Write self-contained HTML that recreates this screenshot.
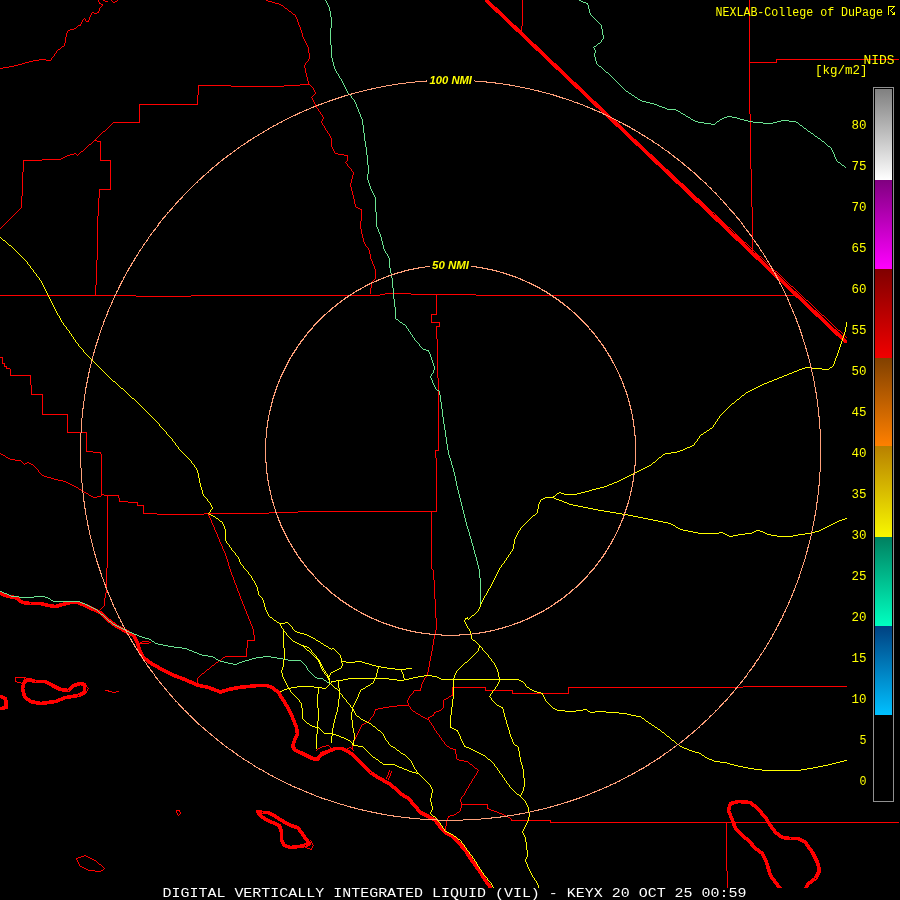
<!DOCTYPE html>
<html><head><meta charset="utf-8"><title>DIGITAL VERTICALLY INTEGRATED LIQUID (VIL) - KEYX</title>
<style>html,body{margin:0;padding:0;background:#000;}body{width:900px;height:900px;overflow:hidden;}svg{display:block;will-change:transform;}.m{font-family:"Liberation Mono",monospace;stroke-width:0;}.s{font-family:"Liberation Sans",sans-serif;font-weight:bold;font-style:italic;}</style></head><body>
<svg width="900" height="900" viewBox="0 0 900 900">
<rect width="900" height="900" fill="#000"/>
<defs><clipPath id="mapclip"><rect x="0" y="0" width="900" height="888"/></clipPath>
<linearGradient id="g0" x1="0" y1="0" x2="0" y2="1"><stop offset="0" stop-color="#808080"/><stop offset="1" stop-color="#ffffff"/></linearGradient>
<linearGradient id="g1" x1="0" y1="0" x2="0" y2="1"><stop offset="0" stop-color="#800080"/><stop offset="1" stop-color="#ff00ff"/></linearGradient>
<linearGradient id="g2" x1="0" y1="0" x2="0" y2="1"><stop offset="0" stop-color="#800000"/><stop offset="1" stop-color="#f00000"/></linearGradient>
<linearGradient id="g3" x1="0" y1="0" x2="0" y2="1"><stop offset="0" stop-color="#804000"/><stop offset="1" stop-color="#ff8000"/></linearGradient>
<linearGradient id="g4" x1="0" y1="0" x2="0" y2="1"><stop offset="0" stop-color="#b88000"/><stop offset="1" stop-color="#f8f800"/></linearGradient>
<linearGradient id="g5" x1="0" y1="0" x2="0" y2="1"><stop offset="0" stop-color="#008060"/><stop offset="1" stop-color="#00ffc0"/></linearGradient>
<linearGradient id="g6" x1="0" y1="0" x2="0" y2="1"><stop offset="0" stop-color="#004080"/><stop offset="1" stop-color="#00c0ff"/></linearGradient>
</defs>
<g clip-path="url(#mapclip)"><g transform="translate(0.5,0.5)" fill="none" shape-rendering="crispEdges" stroke-linejoin="round" stroke-linecap="round">
<polyline points="486,0 845,341" stroke="#ff0000" stroke-width="3.7"/>
<polyline points="0,593 8,596 15,597 22,602 30,603 40,603 48,605 55,606 62,604 70,602 77,602 85,605 93,609 100,612 107,619 115,625 122,629 128,632 133,635 137,642 139,650 143,657 150,662.5 158,667 167,672 175,675.5 183,678.5 197,684.5 208,687 220,691.5 228,689 238,687 248,686 258,685 266,685 272,687 278,692 283,700 288,708 292,717 296,727 297,733 294,740 292,746 295,750 300,752 306,755 312,758 317,759 320,755 325,752 330,750 335,748 341,748 346,750 352,754 358,760 364,766 370,772 376,776 383,780 390,784 396,789 400,793 408,798 414,805 420,812 428,816 435,820 440,827 445,832 452,836 458,842 465,850 470,858 475,865 480,872 485,880 490,887" stroke="#ff0000" stroke-width="3.6"/>
<polyline points="22,688 24,681 28,679 35,681 45,681 52,685 60,689 68,690 73,685 80,683 84,684 84,692 78,695 65,697 55,701 40,703 30,701 24,696 22,688" stroke="#ff0000" stroke-width="3.6"/>
<polyline points="0,696 5,698 6,707 0,708" stroke="#ff0000" stroke-width="3.6"/>
<polyline points="257,811 262,812 268,812 275,816 283,821 290,825 297,827 301,832 305,838 309,843 305,845 298,846 290,847 284,845 281,840 281,832 279,825 272,822 265,819 260,815 257,811" stroke="#ff0000" stroke-width="3.6"/>
<polyline points="780,888 775,882 770,875 766,862 762,853 755,848 748,840 742,835 735,828 732,820 728,810 730,803 738,801 750,802 757,808 765,817 770,825 775,832 782,837 790,838 798,838 805,842 812,852 817,862 819,870 815,878 808,883 805,888" stroke="#ff0000" stroke-width="3.6"/>
</g>
<g fill="none" stroke-width="1" shape-rendering="crispEdges">
<path transform="translate(0,0.5)" d="M103 0h2M266 0h2M105 1h3M115 1h2M268 1h4M113 2h2M272 2h3M99 3h2M275 3h4M101 4h2M279 4h2M281 5h2M493 7h2M285 8h2M289 11h2M92 12h2M97 12h2M94 13h3M293 14h2M86 21h3M509 22h2M78 25h3M74 28h2M70 29h4M68 30h2M520 32h2M525 37h2M62 46h2M58 49h2M540 51h2M39 59h7M776 59h123M33 60h6M46 60h5M29 61h4M25 62h4M749 62h28M22 63h3M18 64h4M14 65h4M9 66h5M556 66h2M3 67h6M0 68h3M572 81h2M300 84h10M198 85h33M284 85h16M231 86h53M587 95h2M139 104h59M603 110h2M113 122h27M619 125h2M103 131h2M634 139h2M94 140h3M97 141h4M89 144h2M81 151h2M74 153h2M335 153h3M70 154h4M338 154h6M650 154h2M67 155h3M344 155h4M65 156h2M63 157h2M61 158h2M42 159h19M23 160h19M100 160h11M666 169h2M681 183h2M99 189h12M697 198h2M356 207h2M358 208h2M360 209h2M712 212h2M728 227h2M744 242h2M751 248h2M752 250h2M759 256h2M775 271h2M791 286h2M385 293h26M380 294h5M411 294h65M0 295h136M191 295h189M476 295h322M136 296h55M806 300h2M431 314h6M822 315h2M431 322h9M436 326h4M838 330h2M0 357h3M2 363h3M4 366h3M6 368h4M10 375h21M31 394h12M42 414h26M67 432h20M435 450h4M86 451h7M93 452h8M1 454h2M3 455h2M6 457h2M8 458h2M10 459h5M15 460h6M27 462h2M25 463h2M29 463h2M31 464h2M42 475h2M44 476h3M47 477h4M51 478h3M54 479h4M58 480h5M63 481h3M66 482h2M68 483h2M70 484h2M72 485h2M74 486h2M76 487h2M79 489h2M81 490h2M84 492h2M86 493h2M101 494h3M89 495h2M104 495h15M91 496h2M97 496h4M93 497h4M119 501h9M128 502h10M137 505h7M298 511h139M269 512h29M143 513h14M204 513h65M157 514h47M247 640h8M142 641h7M140 642h2M149 642h2M139 643h10M225 656h22M223 657h2M219 660h2M216 662h2M212 665h2M207 669h2M202 673h2M15 677h11M15 681h2M17 682h4M21 683h2M743 686h104M452 687h34M568 687h175M105 690h4M414 690h7M485 690h28M108 691h4M116 691h3M112 692h4M512 693h57M451 695h2M449 696h2M446 698h2M444 699h2M397 705h12M389 706h8M383 707h6M378 708h5M375 709h3M439 710h2M413 711h2M436 711h3M434 712h2M416 713h2M418 714h2M432 715h2M421 716h2M430 716h2M423 717h2M428 717h2M425 718h2M427 719h2M366 722h2M364 723h2M362 724h2M326 745h3M322 746h4M447 746h2M320 747h2M349 747h2M318 748h2M330 748h2M347 748h2M351 748h2M450 748h3M328 749h2M453 749h3M325 750h3M322 751h3M320 752h2M457 759h2M459 760h5M464 761h4M470 764h2M475 768h2M461 804h27M487 808h2M489 809h2M176 810h4M491 810h3M494 811h3M457 812h2M497 812h2M499 813h3M454 814h2M502 814h2M450 815h4M504 815h2M448 816h2M506 816h2M508 817h2M511 820h40M550 822h349M308 841h2M306 842h2M304 843h2M305 847h2M307 848h3M310 849h2M84 855h2M81 856h3M86 856h2M78 857h3M88 857h2M76 858h2M90 858h2M92 859h2M94 860h2M99 864h2M80 866h2M82 867h2M84 868h2M86 869h2M88 870h7M101 870h2M95 871h6" stroke="#ff0000"/><path transform="translate(0.5,0)" d="M0 228v1M0 453v1M1 227v1M2 226v1M2 358v5M3 225v1M4 224v1M4 364v2M5 223v1M5 456v1M6 222v1M6 367v1M7 221v1M8 220v1M9 219v1M10 218v1M10 369v6M11 217v1M12 216v1M13 215v1M14 214v1M15 213v1M15 678v3M16 212v1M17 211v1M18 210v1M19 209v1M20 208v1M21 196v12M21 461v1M22 172v24M22 462v1M22 682v1M23 161v11M23 463v1M23 680v2M24 464v1M24 678v2M30 376v9M31 385v9M33 465v1M34 466v1M35 467v1M36 468v1M37 469v1M38 470v2M39 472v1M40 473v1M41 474v1M42 395v19M51 58v2M52 57v1M53 56v1M54 54v2M55 53v1M56 51v2M57 50v1M60 48v1M61 47v1M64 43v3M65 37v6M66 33v4M67 31v2M67 415v17M76 27v1M76 154v1M76 859v1M77 26v1M77 155v1M77 860v2M78 154v1M78 488v1M78 862v2M79 153v1M79 864v2M80 24v1M80 152v1M81 22v2M82 20v2M83 19v1M83 150v1M83 491v1M84 18v1M84 149v1M84 683v1M85 19v2M85 148v1M85 684v1M85 693v1M86 147v1M86 433v18M86 685v2M86 691v2M87 146v1M87 687v1M87 689v2M88 20v1M88 145v1M88 494v1M88 688v1M89 17v3M90 15v2M91 13v2M91 143v1M92 142v1M93 141v1M95 139v1M95 285v10M96 138v1M96 260v25M96 861v1M97 137v1M97 216v44M97 862v1M98 0v2M98 11v1M98 136v1M98 198v18M98 863v1M99 2v1M99 8v3M99 135v1M99 190v8M100 7v1M100 134v1M100 142v18M100 453v1M100 609v1M101 6v1M101 133v1M101 454v40M101 495v1M101 608v1M101 865v1M102 5v1M102 132v1M102 607v1M102 866v1M103 606v1M103 867v1M103 869v1M104 598v8M104 868v1M105 130v1M105 593v5M106 129v1M106 568v25M107 128v1M107 496v72M108 127v1M109 126v1M110 125v1M110 161v28M111 0v1M111 124v1M112 1v1M112 123v1M117 0v1M118 496v2M119 498v3M137 503v2M139 105v17M143 506v7M176 811v2M177 813v2M178 815v1M179 811v1M179 814v1M180 812v2M197 95v9M197 678v5M198 86v9M198 677v1M199 676v1M200 675v1M201 674v1M204 672v1M205 671v1M206 670v1M208 514v2M209 516v2M209 668v1M210 518v2M210 667v1M211 520v3M211 666v1M212 523v2M213 525v2M214 527v3M214 664v1M215 530v2M215 663v1M216 532v2M217 534v3M218 537v2M218 661v1M219 539v3M220 542v2M221 544v2M221 659v1M222 546v3M222 658v1M223 549v2M224 551v2M225 553v3M226 556v3M227 559v3M228 562v4M229 566v3M230 569v3M231 572v3M232 575v2M233 577v3M234 580v3M235 583v2M236 585v3M237 588v3M238 591v2M239 593v3M240 596v3M241 599v2M242 601v3M243 604v2M244 606v3M245 609v2M246 611v3M246 648v8M247 614v2M247 641v7M248 616v3M249 619v2M250 621v3M251 624v2M252 626v3M253 629v6M254 635v5M283 6v1M284 7v1M287 9v1M288 10v1M291 12v1M292 13v1M295 15v2M296 17v2M297 19v3M298 22v3M299 25v2M300 27v3M301 30v3M302 33v4M303 37v2M303 844v1M304 39v2M304 65v3M305 41v2M305 63v2M305 68v5M306 43v2M306 62v1M306 73v4M307 45v2M307 61v1M307 77v4M308 47v6M308 59v2M308 81v3M309 53v6M310 85v1M310 840v1M311 86v1M311 97v1M311 841v2M311 848v1M312 87v1M312 96v1M312 98v2M312 843v2M312 846v2M313 88v2M313 95v1M313 100v2M313 845v1M314 90v2M314 94v1M314 102v2M315 92v2M315 104v2M316 106v2M316 750v1M317 108v1M317 749v1M318 109v2M319 111v1M320 112v2M321 114v1M321 121v2M322 115v2M322 119v2M322 123v2M323 117v2M323 125v1M324 126v2M325 128v2M326 130v1M327 131v2M328 133v1M329 134v2M329 746v1M330 136v2M330 747v1M331 138v9M332 147v2M333 149v2M334 151v2M345 162v1M346 161v1M346 163v1M346 749v1M347 156v5M347 164v2M348 166v1M349 167v1M350 168v1M350 183v4M351 169v2M351 179v4M351 187v4M352 171v1M352 175v4M352 191v4M352 745v3M352 749v1M353 172v3M353 195v4M353 741v4M353 750v1M354 199v5M354 739v2M355 204v3M355 737v2M356 735v2M357 733v2M358 731v2M359 729v2M360 221v8M360 727v2M361 210v11M361 229v5M361 725v2M362 234v4M363 238v4M364 242v2M365 244v2M366 246v1M367 247v1M368 248v2M368 721v1M369 250v4M369 720v1M370 254v5M370 288v6M370 718v2M371 259v2M371 282v6M371 717v1M372 261v3M372 281v1M372 716v1M373 264v2M373 280v1M373 714v2M374 266v3M374 279v1M374 711v3M375 269v10M375 710v1M386 777v2M387 775v2M388 772v3M388 778v2M389 770v2M389 776v2M390 773v3M391 771v2M407 700v3M408 698v2M408 703v2M409 696v2M409 706v1M410 695v1M410 707v2M411 694v1M411 709v1M412 693v1M412 710v1M413 691v2M415 712v1M420 688v2M420 715v1M421 684v4M422 682v2M423 680v2M424 678v2M425 677v1M426 675v2M427 672v3M428 667v5M428 718v1M429 661v6M429 720v2M430 656v5M430 722v1M431 315v7M431 512v57M431 651v5M431 723v2M432 569v1M432 645v6M432 725v1M433 570v10M433 639v6M433 714v1M433 726v2M434 580v19M434 634v5M434 713v1M434 728v2M435 451v7M435 599v19M435 630v4M435 730v1M436 295v19M436 327v12M436 458v53M436 618v12M436 731v2M437 339v39M437 733v1M438 378v72M438 734v1M439 323v3M439 735v2M440 737v1M441 709v1M441 738v2M442 708v1M442 740v1M443 700v8M443 741v1M444 742v2M445 744v1M445 826v5M446 745v1M446 821v5M447 818v3M448 697v1M448 817v1M449 747v1M452 688v7M455 750v4M456 754v5M456 813v1M459 811v1M460 799v3M460 808v3M461 797v2M461 802v2M461 805v3M462 796v1M463 795v1M464 793v2M465 791v2M466 789v2M467 788v1M468 762v1M468 786v2M469 763v1M469 784v2M470 783v1M471 781v2M472 765v1M472 779v2M473 766v1M473 778v1M474 767v1M474 776v2M475 775v1M476 773v2M477 769v1M477 771v2M478 770v1M485 688v2M486 0v1M487 1v1M487 805v3M488 2v1M489 3v1M490 4v1M491 5v1M492 6v1M495 8v1M496 9v1M497 10v1M498 11v1M499 12v1M500 13v1M501 14v1M502 15v1M503 16v1M504 17v1M505 18v1M506 19v1M507 20v1M508 21v1M510 818v1M511 23v1M511 819v1M512 24v1M512 691v2M513 25v1M514 26v1M515 27v1M516 28v1M517 29v1M518 30v1M519 31v1M521 26v6M521 33v1M522 0v26M522 34v1M523 35v1M524 36v1M527 38v1M528 39v1M529 40v1M530 41v1M531 42v1M532 43v1M533 44v1M534 45v1M535 46v1M536 47v1M537 48v1M538 49v1M539 50v1M542 52v1M543 53v1M544 54v1M545 55v1M546 56v1M547 57v1M548 58v1M549 59v1M550 60v1M550 821v1M551 61v1M552 62v1M553 63v1M554 64v1M555 65v1M558 67v1M559 68v1M560 69v1M561 70v1M562 71v1M563 72v1M564 73v1M565 74v1M566 75v1M567 76v1M568 77v1M568 688v5M569 78v1M570 79v1M571 80v1M574 82v1M575 83v1M576 84v1M577 85v1M578 86v1M579 87v1M580 88v1M581 89v1M582 90v1M583 91v1M584 92v1M585 93v1M586 94v1M589 96v1M590 97v1M591 98v1M592 99v1M593 100v1M594 101v1M595 102v1M596 103v1M597 104v1M598 105v1M599 106v1M600 107v1M601 108v1M602 109v1M605 111v1M606 112v1M607 113v1M608 114v1M609 115v1M610 116v1M611 117v1M612 118v1M613 119v1M614 120v1M615 121v1M616 122v1M617 123v1M618 124v1M621 126v1M622 127v1M623 128v1M624 129v1M625 130v1M626 131v1M627 132v1M628 133v1M629 134v1M630 135v1M631 136v1M632 137v1M633 138v1M636 140v1M637 141v1M638 142v1M639 143v1M640 144v1M641 145v1M642 146v1M643 147v1M644 148v1M645 149v1M646 150v1M647 151v1M648 152v1M649 153v1M652 155v1M653 156v1M654 157v1M655 158v1M656 159v1M657 160v1M658 161v1M659 162v1M660 163v1M661 164v1M662 165v1M663 166v1M664 167v1M665 168v1M668 170v1M669 171v1M670 172v1M671 173v1M672 174v1M673 175v1M674 176v1M675 177v1M676 178v1M677 179v1M678 180v1M679 181v1M680 182v1M683 184v1M684 185v1M685 186v1M686 187v1M687 188v1M688 189v1M689 190v1M690 191v1M691 192v1M692 193v1M693 194v1M694 195v1M695 196v1M696 197v1M699 199v1M700 200v1M701 201v1M702 202v1M703 203v1M704 204v1M705 205v1M706 206v1M707 207v1M708 208v1M709 209v1M710 210v1M711 211v1M714 213v1M715 214v1M716 215v1M717 216v1M718 217v1M719 218v1M720 219v1M721 220v1M722 221v1M723 222v1M724 223v1M725 224v1M726 225v1M726 823v48M727 226v1M727 871v17M730 228v1M731 229v1M732 230v1M733 231v1M734 232v1M735 233v1M736 234v1M737 235v1M738 236v1M739 237v1M740 238v1M741 239v1M742 240v1M743 241v1M746 243v1M747 244v1M748 245v1M749 0v62M749 63v51M749 246v1M750 114v55M750 247v1M751 169v38M752 207v41M752 249v1M754 251v1M755 252v1M756 253v1M757 254v1M758 255v1M761 257v1M762 258v1M763 259v1M764 260v1M765 261v1M766 262v1M767 263v1M768 264v1M769 265v1M770 266v1M771 267v1M772 268v1M773 269v1M774 270v1M776 60v2M777 272v1M778 273v1M779 274v1M780 275v1M781 276v1M782 277v1M783 278v1M784 279v1M785 280v1M786 281v1M787 282v1M788 283v1M789 284v1M790 285v1M793 287v1M794 288v1M795 289v1M796 290v1M797 291v1M798 292v1M799 293v1M800 294v1M801 295v1M802 296v1M803 297v1M804 298v1M805 299v1M808 301v1M809 302v1M810 303v1M811 304v1M812 305v1M813 306v1M814 307v1M815 308v1M816 309v1M817 310v1M818 311v1M819 312v1M820 313v1M821 314v1M824 316v1M825 317v1M826 318v1M827 319v1M828 320v1M829 321v1M830 322v1M831 323v1M832 324v1M833 325v1M834 326v1M835 327v1M836 328v1M837 329v1M840 331v1M841 332v1M842 333v1M843 334v1M844 335v1M845 336v1M846 337v1" stroke="#ff0000"/>
<path transform="translate(0,0.5)" d="M579 0h2M581 1h2M583 2h3M586 3h2M598 43h2M594 46h2M599 66h2M606 72h2M626 91h2M629 93h2M632 95h2M635 97h2M638 99h2M640 100h2M642 101h4M646 102h4M650 103h4M654 104h3M657 105h2M659 106h3M662 107h3M665 108h2M667 109h9M676 110h2M678 111h2M681 113h2M683 114h2M686 116h2M727 116h5M688 117h2M724 117h3M732 117h5M722 118h2M737 118h3M691 119h2M720 119h2M740 119h4M693 120h2M744 120h4M781 120h8M695 121h3M717 121h2M748 121h5M777 121h4M789 121h7M698 122h6M753 122h10M773 122h4M796 122h2M704 123h7M763 123h10M711 124h4M800 125h2M804 128h2M808 131h2M811 133h2M815 136h2M818 138h2M822 141h2M828 146h2M838 162h2M842 165h2M396 319h2M400 322h2M403 324h2M423 349h3M426 350h3M437 390h2M0 591h2M2 592h2M4 593h3M7 594h2M9 595h2M11 596h8M34 596h11M19 597h15M45 597h3M48 598h2M51 600h2M53 601h27M80 602h2M82 603h3M85 604h2M87 605h2M89 606h2M91 607h2M93 608h2M95 609h2M101 614h2M109 621h2M113 624h2M115 625h2M117 626h2M119 627h2M121 628h2M123 629h2M125 630h2M127 631h2M129 632h3M132 633h2M134 634h3M137 635h2M139 636h3M142 637h3M145 638h4M149 639h2M152 641h2M155 643h3M158 644h5M163 645h5M168 646h6M174 647h8M182 648h5M187 649h2M189 650h3M192 651h2M194 652h3M197 653h2M199 654h3M202 655h6M208 656h5M263 656h8M213 657h2M256 657h7M271 657h6M252 658h4M277 658h6M216 659h2M249 659h3M283 659h5M218 660h2M245 660h4M288 660h13M220 661h4M242 661h3M224 662h4M239 662h3M228 663h5M237 663h2M233 664h4M315 677h2M317 678h6M324 680h2M327 682h2" stroke="#6ce392"/><path transform="translate(0.5,0)" d="M50 599v1M97 610v1M98 611v1M99 612v1M100 613v1M103 615v1M104 616v1M105 617v1M106 618v1M107 619v1M108 620v1M111 622v1M112 623v1M151 640v1M154 642v1M215 658v1M301 661v1M302 662v1M303 663v1M304 664v1M305 665v1M306 666v2M307 668v2M308 670v1M309 671v1M310 672v1M311 673v1M312 674v1M313 675v1M314 676v1M323 679v1M325 0v1M326 1v2M326 681v1M327 3v2M328 5v2M329 7v4M329 683v1M330 11v6M330 28v17M331 17v11M331 45v13M332 58v4M333 62v4M334 66v3M335 69v2M336 71v2M337 73v1M338 74v2M339 76v2M340 78v1M341 79v2M342 81v2M343 83v2M344 85v2M345 87v2M346 89v2M347 91v2M348 93v1M349 94v1M350 95v1M351 96v2M352 98v1M353 99v1M354 100v2M355 102v2M356 104v3M357 107v2M358 109v3M359 112v2M360 114v3M361 117v2M362 119v6M363 125v8M364 133v8M365 141v6M366 147v8M367 155v10M367 174v6M368 165v9M368 180v3M369 183v3M370 186v3M371 189v2M372 191v2M373 193v2M374 195v2M375 197v15M376 212v15M377 227v2M378 229v3M379 232v2M380 234v3M381 237v4M382 241v4M383 245v4M384 249v2M385 251v2M386 253v1M387 254v2M388 256v2M389 258v10M390 268v5M391 273v5M392 278v10M393 288v11M394 299v8M395 307v12M398 320v1M399 321v1M402 323v1M405 325v1M406 326v2M407 328v1M408 329v2M409 331v1M410 332v2M411 334v1M412 335v2M413 337v1M414 338v2M415 340v1M416 341v1M417 342v1M418 343v1M419 344v2M420 346v1M421 347v1M422 348v1M428 351v1M429 352v2M430 354v3M430 376v2M431 357v3M431 374v2M431 378v2M432 360v3M432 373v1M432 380v3M433 363v3M433 370v3M433 383v2M434 366v4M434 385v2M435 387v2M436 389v1M439 391v4M440 395v7M441 402v7M442 409v8M443 417v7M444 424v6M445 430v7M446 437v7M447 444v6M448 450v5M449 455v3M450 458v3M451 461v4M452 465v3M453 468v4M454 472v4M455 476v5M456 481v5M457 486v4M458 490v4M459 494v4M460 498v4M461 502v4M462 506v4M463 510v4M464 514v4M465 518v4M466 522v4M467 526v3M468 529v3M469 532v4M470 536v3M471 539v4M472 543v3M473 546v4M474 550v4M475 554v3M476 557v4M477 561v4M478 565v4M479 569v9M480 578v28M587 4v1M588 5v4M589 9v4M590 13v2M591 15v1M592 16v1M593 17v1M593 47v1M594 18v1M594 48v2M594 53v4M595 19v1M595 50v3M595 57v4M596 20v1M596 45v1M596 61v3M597 21v1M597 44v1M597 64v1M598 22v1M598 65v1M599 23v1M600 24v1M600 42v1M601 25v4M601 40v2M601 67v1M602 29v6M602 39v1M602 68v1M603 35v4M603 69v1M604 70v1M605 71v1M608 73v1M609 74v1M610 75v1M611 76v1M612 77v1M613 78v1M614 79v1M615 80v1M616 81v1M617 82v1M618 83v1M619 84v1M620 85v1M621 86v1M622 87v1M623 88v1M624 89v1M625 90v1M628 92v1M631 94v1M634 96v1M637 98v1M680 112v1M685 115v1M690 118v1M715 123v1M716 122v1M719 120v1M798 123v1M799 124v1M802 126v1M803 127v1M806 129v1M807 130v1M810 132v1M813 134v1M814 135v1M817 137v1M820 139v1M821 140v1M824 142v1M825 143v1M826 144v1M827 145v1M830 147v1M831 148v2M832 150v2M833 152v2M834 154v3M835 157v2M836 159v2M837 161v1M840 163v1M841 164v1M844 166v1M845 167v1" stroke="#6ce392"/>
<path transform="translate(0,0.5)" d="M3 240h2M9 245h2M805 367h6M830 367h2M802 368h3M811 368h11M799 369h3M822 369h7M797 370h2M794 371h3M792 372h2M789 373h3M787 374h2M784 375h3M782 376h2M779 377h3M777 378h2M774 379h3M772 380h2M113 381h2M769 381h3M767 382h2M764 383h3M762 384h2M760 385h2M758 386h2M756 387h2M121 388h2M754 388h2M752 389h2M750 390h2M748 391h2M746 392h2M742 395h2M132 398h2M737 399h2M732 403h2M710 428h2M707 430h2M704 432h2M701 434h2M692 445h2M690 446h2M687 447h3M685 448h2M683 449h2M680 450h3M677 451h3M671 452h6M665 453h6M663 454h2M659 457h2M653 462h2M649 465h2M647 466h2M645 467h2M643 468h2M641 469h2M639 470h2M637 471h2M635 472h2M633 473h2M631 474h2M629 475h2M627 476h2M625 477h2M623 478h2M621 479h2M619 480h2M617 481h2M614 482h3M612 483h2M609 484h3M607 485h2M604 486h3M600 487h4M596 488h4M592 489h4M589 490h3M585 491h4M559 492h2M581 492h4M557 493h2M561 493h3M577 493h4M564 494h13M553 496h2M545 497h9M543 498h2M554 498h2M541 499h2M556 499h3M559 500h3M562 501h2M564 502h3M567 503h2M569 504h4M573 505h5M578 506h5M583 507h5M588 508h5M593 509h5M598 510h6M604 511h6M610 512h6M616 513h6M209 514h2M622 514h6M211 515h2M533 515h2M628 515h5M213 516h2M633 516h5M638 517h5M216 518h2M643 518h5M845 518h2M648 519h5M842 519h3M653 520h5M839 520h3M220 521h2M658 521h5M837 521h2M663 522h5M835 522h2M668 523h3M833 523h2M671 524h2M831 524h2M673 525h2M829 525h2M827 526h2M676 527h2M825 527h2M678 528h2M823 528h2M680 529h3M821 529h2M683 530h5M756 530h4M819 530h2M688 531h5M754 531h2M760 531h3M815 531h4M693 532h5M719 532h4M752 532h2M763 532h2M812 532h3M698 533h21M723 533h2M745 533h7M765 533h2M805 533h7M725 534h2M738 534h7M767 534h4M798 534h7M727 535h2M733 535h5M771 535h6M793 535h5M729 536h4M777 536h16M472 615h2M270 617h2M465 618h3M274 620h2M277 622h2M285 622h3M279 623h6M283 631h2M295 631h2M297 632h3M300 633h4M304 634h3M307 635h2M309 636h2M311 637h2M313 638h2M316 640h2M473 640h2M293 641h2M318 641h2M295 642h2M297 643h2M321 643h2M299 644h2M301 645h3M324 645h2M303 646h4M326 646h2M479 646h2M307 647h2M329 648h2M332 648h2M307 650h2M315 657h2M316 658h2M317 659h2M318 660h2M318 661h2M341 661h5M355 661h7M319 662h2M346 662h9M362 662h3M465 662h2M319 663h2M365 663h4M320 664h2M369 664h3M320 665h2M372 665h4M376 666h5M321 667h2M381 667h6M339 668h2M387 668h8M406 668h6M322 669h2M337 669h2M395 669h11M335 670h2M333 671h2M324 672h2M331 672h2M326 675h2M424 675h8M327 676h3M418 676h6M432 676h5M327 677h2M413 677h5M437 677h2M328 678h2M348 678h41M409 678h4M439 678h2M328 679h2M343 679h5M389 679h8M404 679h5M441 679h78M336 680h7M397 680h7M519 680h2M331 681h5M521 681h2M371 683h2M368 685h2M297 686h17M366 686h2M291 687h6M314 687h8M527 687h2M287 688h4M322 688h4M335 688h2M363 688h2M284 689h3M361 689h2M530 689h2M282 690h2M338 690h2M532 690h2M280 691h2M534 691h3M537 692h4M339 693h2M541 693h2M497 705h2M499 706h2M351 707h2M501 707h2M553 708h2M352 709h2M555 709h2M583 709h4M352 710h2M557 710h8M576 710h7M565 711h11M588 711h2M595 711h11M590 712h5M606 712h13M619 713h8M627 714h4M631 715h5M357 716h2M636 716h5M642 718h2M361 719h2M363 720h2M365 721h2M646 721h2M367 722h2M307 723h2M369 723h2M649 723h2M310 725h2M652 725h2M312 726h3M373 726h2M315 727h4M450 727h2M655 727h2M452 728h2M454 729h2M658 729h2M378 730h2M456 730h2M662 732h2M324 733h9M332 734h4M336 735h3M339 736h2M667 736h2M341 737h3M344 738h2M346 739h2M348 740h2M672 740h2M352 743h2M352 744h2M677 744h2M353 745h5M515 745h2M358 746h5M391 746h2M464 746h2M680 746h2M393 747h2M466 747h3M682 747h2M469 748h2M684 748h3M471 749h2M687 749h2M397 750h2M473 750h2M689 750h3M475 751h2M692 751h3M477 752h2M695 752h4M401 753h2M479 753h2M699 753h2M403 754h2M481 754h2M483 755h2M702 755h2M373 757h2M705 757h2M707 758h2M376 759h2M488 759h2M709 759h3M712 760h2M844 760h3M714 761h6M840 761h4M380 762h2M720 762h7M836 762h4M727 763h3M832 763h4M383 764h12M730 764h4M828 764h4M395 765h2M734 765h4M823 765h5M397 766h2M738 766h5M818 766h5M399 767h3M743 767h5M813 767h5M402 768h2M748 768h6M807 768h6M404 769h3M754 769h8M801 769h6M407 770h2M762 770h39M409 771h3M412 772h4M416 773h3M517 794h2M519 795h2M433 816h2M445 831h2M447 832h2M449 833h2M451 834h2M454 836h2M458 839h2" stroke="#ffff00"/><path transform="translate(0.5,0)" d="M0 237v1M1 238v1M2 239v1M5 241v1M6 242v1M7 243v1M8 244v1M11 246v1M12 247v1M13 248v1M14 249v1M15 250v1M16 251v1M17 252v1M18 253v1M19 254v1M20 255v1M21 256v1M22 257v1M23 258v1M24 259v1M25 260v1M26 261v1M27 262v2M28 264v1M29 265v1M30 266v2M31 268v1M32 269v1M33 270v2M34 272v1M35 273v1M36 274v2M37 276v1M38 277v1M39 278v2M40 280v1M41 281v2M42 283v2M43 285v2M44 287v2M45 289v2M46 291v2M47 293v2M48 295v2M49 297v2M50 299v2M51 301v2M52 303v2M53 305v2M54 307v2M55 309v2M56 311v2M57 313v2M58 315v1M59 316v2M60 318v2M61 320v2M62 322v1M63 323v2M64 325v1M65 326v1M66 327v2M67 329v1M68 330v1M69 331v2M70 333v1M71 334v2M72 336v1M73 337v2M74 339v1M75 340v2M76 342v1M77 343v1M78 344v2M79 346v1M80 347v1M81 348v1M82 349v1M83 350v2M84 352v1M85 353v1M86 354v1M87 355v1M88 356v1M89 357v1M90 358v1M91 359v1M92 360v1M93 361v1M94 362v1M95 363v1M96 364v1M97 365v1M98 366v1M99 367v1M100 368v1M101 369v1M102 370v1M103 371v1M104 372v1M105 373v1M106 374v1M107 375v1M108 376v1M109 377v1M110 378v1M111 379v1M112 380v1M115 382v1M116 383v1M117 384v1M118 385v1M119 386v1M120 387v1M123 389v1M124 390v1M125 391v1M126 392v1M127 393v1M128 394v1M129 395v1M130 396v1M131 397v1M134 399v1M135 400v1M136 401v1M137 402v1M138 403v1M139 404v1M140 405v1M141 406v1M142 407v1M143 408v1M144 409v1M145 410v1M146 411v1M147 412v1M148 413v1M149 414v1M150 415v1M151 416v1M152 417v1M153 418v1M154 419v1M155 420v1M156 421v1M157 422v1M158 423v1M159 424v2M160 426v1M161 427v1M162 428v1M163 429v1M164 430v1M165 431v1M166 432v2M167 434v1M168 435v1M169 436v1M170 437v1M171 438v1M172 439v2M173 441v1M174 442v1M175 443v2M176 445v1M177 446v1M178 447v2M179 449v1M180 450v1M181 451v1M182 452v1M183 453v1M184 454v1M185 455v1M186 456v1M187 457v1M188 458v1M189 459v1M190 460v1M191 461v2M192 463v1M193 464v1M194 465v2M195 467v1M196 468v2M197 470v3M198 473v5M199 478v5M200 483v4M201 487v3M202 490v4M203 494v2M204 496v1M205 497v1M206 498v1M207 499v2M208 501v1M208 513v1M209 502v1M209 512v1M210 503v2M210 510v2M211 505v2M211 509v1M212 507v2M215 517v1M218 519v1M219 520v1M222 522v2M223 524v2M224 526v3M225 529v12M226 541v2M227 543v1M228 544v1M229 545v2M230 547v1M231 548v2M232 550v1M233 551v1M234 552v1M235 553v2M236 555v1M237 556v1M238 557v2M239 559v3M240 562v2M241 564v1M242 565v1M243 566v2M244 568v1M245 569v1M246 570v1M247 571v1M248 572v2M249 574v1M250 575v1M251 576v2M252 578v2M253 580v1M254 581v2M255 583v2M256 585v2M257 587v4M258 591v4M259 595v1M260 596v1M261 597v1M262 598v2M263 600v3M264 603v4M265 607v3M266 610v2M267 612v2M268 614v2M269 616v1M272 618v1M273 619v1M276 621v1M280 624v2M281 626v2M281 670v3M282 628v1M282 667v3M282 673v4M283 629v2M283 632v16M283 660v7M283 677v2M284 648v12M284 679v2M285 632v1M285 681v2M286 633v2M286 683v2M287 635v1M287 685v2M288 623v1M288 636v1M288 687v1M289 624v1M289 637v1M289 689v1M290 625v1M290 638v1M290 690v2M291 626v1M291 639v1M291 692v1M292 627v2M292 640v1M292 693v1M293 629v1M293 694v1M294 630v1M294 695v1M295 696v1M296 697v1M297 698v1M298 699v1M299 700v2M300 702v1M301 703v5M302 708v11M303 719v1M304 647v1M304 720v1M305 648v1M305 721v1M306 649v1M306 722v1M309 648v1M309 651v1M309 724v1M310 649v1M310 652v1M311 650v2M311 653v1M312 652v1M312 654v1M313 653v1M313 655v1M314 654v1M314 656v1M315 639v1M315 655v1M316 656v1M316 734v15M317 694v14M317 721v6M317 728v6M318 688v6M318 708v13M319 728v1M320 642v1M320 666v1M320 729v1M321 668v1M321 730v1M322 666v1M322 670v1M322 731v1M323 644v1M323 668v1M323 671v1M323 732v1M324 670v1M324 673v1M325 671v1M325 674v1M326 673v1M326 687v1M327 674v1M327 686v1M328 647v1M328 685v1M329 675v1M329 680v3M329 684v1M330 673v2M330 683v1M331 649v1M331 682v1M331 684v1M331 736v7M332 685v1M332 728v5M332 735v1M333 686v1M333 723v5M334 649v1M334 687v1M334 719v4M335 650v1M335 715v4M336 651v1M336 712v3M337 652v1M337 689v1M337 707v5M338 653v1M338 681v7M338 699v8M339 654v1M339 688v2M339 691v2M339 694v5M340 655v3M341 658v3M341 662v1M341 666v2M341 694v1M342 663v3M342 695v2M343 697v1M344 698v1M345 699v1M346 700v2M347 702v1M348 703v1M349 704v1M350 705v2M350 741v1M351 712v8M351 742v1M352 708v1M352 711v1M352 720v8M353 705v2M353 728v5M353 740v3M354 703v2M354 711v2M354 733v7M355 701v2M355 713v2M356 699v2M356 715v1M357 697v2M358 694v3M359 692v2M359 717v1M360 690v2M360 718v1M363 747v1M364 748v1M365 687v1M365 749v1M366 750v1M367 751v1M368 752v1M369 753v1M370 684v1M370 754v1M371 724v1M371 755v1M372 725v1M372 756v1M373 681v2M374 679v2M375 677v1M375 727v1M375 758v1M376 673v4M376 728v1M377 669v4M377 729v1M378 667v2M378 760v1M379 761v1M380 731v1M381 732v1M382 733v1M382 763v1M383 734v2M384 736v2M385 738v2M386 740v1M387 741v1M388 742v2M389 744v1M390 745v1M395 748v1M396 749v1M399 751v1M400 752v1M401 670v2M402 672v2M403 674v4M404 678v1M405 755v1M406 756v1M407 757v1M408 758v1M409 759v1M410 760v1M411 761v2M412 763v2M413 765v2M414 767v2M415 769v1M416 770v2M417 772v1M419 774v1M420 775v1M421 776v1M422 777v1M423 778v1M424 779v1M425 780v1M426 781v1M427 782v1M428 783v1M429 784v1M430 785v2M430 798v4M430 812v2M431 787v2M431 793v5M431 802v4M431 810v2M431 814v1M432 789v4M432 806v4M432 815v1M435 817v1M436 818v1M437 819v2M438 821v1M439 822v1M440 823v2M441 825v1M442 826v2M443 828v1M444 829v2M450 715v12M451 707v8M452 699v8M453 678v1M453 680v19M453 835v1M454 675v3M455 673v2M456 671v2M456 837v1M457 670v1M457 731v1M457 838v1M458 669v1M458 732v2M459 668v1M459 734v2M460 667v1M460 736v3M460 840v1M461 666v1M461 739v2M461 841v2M462 665v1M462 741v2M462 843v1M463 664v1M463 743v2M463 844v1M464 620v2M464 663v1M464 745v1M464 845v2M465 619v1M465 622v2M465 847v1M466 624v2M466 848v2M467 617v1M467 626v2M467 661v1M467 850v1M468 619v1M468 628v1M468 660v1M468 851v1M469 618v1M469 629v2M469 659v1M469 852v2M470 617v1M470 631v4M470 658v1M470 854v1M471 616v1M471 635v4M471 657v1M471 855v1M472 639v1M472 656v1M472 856v2M473 655v1M473 858v1M474 614v1M474 654v1M474 859v2M475 613v1M475 641v1M475 653v1M475 861v1M476 612v1M476 642v1M476 652v1M476 862v2M477 611v1M477 643v1M477 651v1M477 864v2M478 609v2M478 644v1M478 648v3M478 866v1M479 607v2M479 645v1M479 647v1M479 867v2M480 604v3M480 869v1M481 602v2M481 647v1M481 870v2M482 600v2M482 648v2M482 872v1M483 598v2M483 650v1M483 873v2M484 596v2M484 651v1M484 875v1M485 595v1M485 652v1M485 756v1M485 876v1M486 593v2M486 653v1M486 757v1M486 877v1M487 591v2M487 654v1M487 758v1M487 878v2M488 589v2M488 655v2M488 880v1M489 588v1M489 657v1M489 696v1M489 881v1M490 586v2M490 658v1M490 694v2M490 697v1M490 760v1M490 882v1M491 584v2M491 659v2M491 693v1M491 698v2M491 761v1M491 883v2M492 582v2M492 661v1M492 691v2M492 700v1M492 762v1M492 885v2M493 580v2M493 662v1M493 690v1M493 701v1M493 763v1M493 887v1M494 578v2M494 663v2M494 689v1M494 702v1M494 764v2M495 576v2M495 665v2M495 687v2M495 703v1M495 766v1M496 574v2M496 667v2M496 686v1M496 704v1M496 767v1M497 572v2M497 669v3M497 684v2M497 768v2M498 570v2M498 672v5M498 682v2M498 770v1M499 568v2M499 677v2M499 680v2M499 771v2M500 567v1M500 773v1M501 565v2M501 774v1M502 564v1M502 708v1M502 775v2M503 563v1M503 709v4M503 777v1M504 561v2M504 713v4M504 778v2M505 560v1M505 717v3M505 780v1M506 558v2M506 720v4M506 781v2M507 557v1M507 724v3M507 783v1M508 555v2M508 727v3M508 784v1M509 554v1M509 730v4M509 785v2M510 552v2M510 734v3M510 787v1M511 551v1M511 737v2M511 788v1M512 549v2M512 739v3M512 789v1M513 544v5M513 742v2M513 790v1M514 539v5M514 744v1M514 791v1M515 537v2M515 792v1M516 535v2M516 793v1M517 533v2M517 746v1M518 531v2M518 747v4M519 530v1M519 751v6M520 528v2M520 757v5M520 796v1M521 527v1M521 762v3M521 793v2M521 797v1M522 526v1M522 765v4M522 791v2M522 798v1M522 831v2M523 525v1M523 682v1M523 769v9M523 787v4M523 799v1M523 829v2M523 833v2M524 524v1M524 683v1M524 778v9M524 800v1M524 827v2M524 835v2M525 523v1M525 684v2M525 801v2M525 825v2M525 837v5M525 859v3M526 522v1M526 686v1M526 803v2M526 823v2M526 842v8M526 857v2M526 862v2M527 521v1M527 805v2M527 821v2M527 850v7M527 864v3M528 520v1M528 807v5M528 817v4M528 867v2M529 519v1M529 688v1M529 812v5M529 869v2M530 518v1M530 871v2M531 517v1M531 873v2M532 516v1M532 875v2M533 877v1M534 878v2M535 514v1M535 880v1M536 513v1M536 881v2M537 509v4M537 883v2M538 504v5M538 885v3M539 502v2M540 500v2M542 694v1M543 695v2M544 697v2M545 699v2M546 701v1M547 702v1M548 703v1M549 704v1M550 705v1M551 706v1M552 707v1M555 495v1M556 494v1M587 710v1M641 717v1M644 719v1M645 720v1M648 722v1M651 464v1M651 724v1M652 463v1M654 726v1M655 461v1M656 460v1M657 459v1M657 728v1M658 458v1M660 730v1M661 456v1M661 731v1M662 455v1M664 733v1M665 734v1M666 735v1M669 737v1M670 738v1M671 739v1M674 741v1M675 526v1M675 742v1M676 743v1M679 745v1M694 443v2M695 442v1M696 441v1M697 439v2M698 438v1M699 436v2M700 435v1M701 754v1M703 433v1M704 756v1M706 431v1M709 429v1M712 427v1M713 425v2M714 424v1M715 422v2M716 421v1M717 419v2M718 418v1M719 416v2M720 415v1M721 414v1M722 413v1M723 412v1M724 411v1M725 410v1M726 409v1M727 408v1M728 407v1M729 406v1M730 405v1M731 404v1M734 402v1M735 401v1M736 400v1M739 398v1M740 397v1M741 396v1M744 394v1M745 393v1M829 368v1M832 366v1M833 364v2M834 361v3M835 358v3M836 356v2M837 353v3M838 350v3M839 347v3M840 344v3M841 341v3M842 338v3M843 335v3M844 332v3M845 327v5M846 322v5" stroke="#ffff00"/>
<path transform="translate(0,0.5)" d="M415 81h12M475 81h12M406 82h9M486 82h10M398 83h8M495 83h8M392 84h6M503 84h7M386 85h6M509 85h6M381 86h5M515 86h5M376 87h5M520 87h5M371 88h5M525 88h5M367 89h5M530 89h4M363 90h4M534 90h5M359 91h4M538 91h4M355 92h4M542 92h4M351 93h4M546 93h4M348 94h4M550 94h4M344 95h4M553 95h4M341 96h4M556 96h4M338 97h4M559 97h4M335 98h4M562 98h4M332 99h4M566 99h3M329 100h4M569 100h3M327 101h3M572 101h2M324 102h3M574 102h4M321 103h3M577 103h3M318 104h4M580 104h3M316 105h3M583 105h2M313 106h3M585 106h3M311 107h3M587 107h3M309 108h2M590 108h3M306 109h3M592 109h3M304 110h3M594 110h3M302 111h2M597 111h3M299 112h3M599 112h3M297 113h3M602 113h2M295 114h3M603 114h3M293 115h3M606 115h2M291 116h2M608 116h2M289 117h2M610 117h2M287 118h2M612 118h2M285 119h2M614 119h2M283 120h2M616 120h2M281 121h2M618 121h2M279 122h3M619 122h3M277 123h2M622 123h2M276 124h2M623 124h3M273 125h3M625 125h3M272 126h2M627 126h3M270 127h2M629 127h2M268 128h2M631 128h2M267 129h2M632 129h3M265 130h2M634 130h2M263 131h2M636 131h2M262 132h2M638 132h2M260 133h2M639 133h2M258 134h2M641 134h2M257 135h2M642 135h3M255 136h2M644 136h2M253 137h2M646 137h2M252 138h2M647 138h2M250 139h2M649 139h2M248 140h3M651 140h2M247 141h2M652 141h2M246 142h2M653 142h2M244 143h2M655 143h2M243 144h2M657 144h2M241 145h2M658 145h2M238 147h2M661 147h2M237 148h2M662 148h2M234 150h2M665 150h2M233 151h2M667 151h2M668 152h2M230 153h2M669 153h2M229 154h2M227 155h2M672 155h2M226 156h2M673 156h2M225 157h2M674 157h2M223 158h2M676 158h2M222 159h2M677 159h2M221 160h2M678 160h2M218 162h2M681 162h2M217 163h2M682 163h2M216 164h2M683 164h2M215 165h2M684 165h2M212 167h2M687 167h2M211 168h2M688 168h2M210 169h2M689 169h2M209 170h2M690 170h2M207 172h2M693 172h2M694 173h2M695 174h2M203 175h2M696 175h2M202 176h2M697 176h2M201 177h2M698 177h2M200 178h2M699 178h2M199 179h2M700 179h2M196 182h2M704 182h2M705 183h2M709 187h2M710 188h2M714 192h2M715 193h2M181 197h2M180 198h2M179 199h2M720 199h2M177 201h2M176 202h2M723 202h2M175 203h2M724 203h2M725 204h2M171 208h2M170 209h2M729 209h2M169 210h2M730 210h2M731 211h2M167 212h2M732 212h2M733 213h2M164 216h2M163 217h2M736 217h2M162 218h2M737 218h2M738 219h2M159 222h2M158 223h2M741 223h2M157 225h2M743 226h2M154 229h2M153 230h2M746 230h2M747 231h2M150 234h2M749 234h2M750 235h2M146 240h2M754 241h2M143 244h2M756 244h2M757 245h2M139 250h2M760 250h2M136 255h2M764 256h2M134 258h2M133 260h2M767 261h2M131 263h2M130 265h2M770 266h2M128 268h2M771 268h2M127 270h2M772 270h2M774 273h2M775 275h2M123 277h2M776 277h2M777 279h2M121 281h2M120 283h2M779 283h2M119 285h2M118 287h2M116 291h2M114 295h2M785 295h2M787 299h2M111 302h2M789 304h2M107 311h2M792 311h2M106 314h2M795 318h2M103 321h2M796 321h2M798 326h2M799 329h2M800 332h2M801 335h2M97 339h2M96 342h2M95 345h2M805 348h2M93 352h2M807 355h2M810 367h2M88 372h2M87 377h2M86 382h2M85 387h2M815 392h2M82 408h2M818 416h2M818 485h2M83 501h2M816 502h2M84 508h2M814 515h2M87 525h2M807 547h2M806 551h2M94 554h2M96 561h2M97 564h2M98 567h2M99 570h2M100 573h2M798 577h2M104 584h2M105 587h2M793 590h2M107 592h2M791 595h2M110 599h2M788 602h2M112 604h2M114 608h2M784 611h2M782 615h2M118 617h2M780 619h2M120 621h2M779 621h2M778 623h2M122 625h2M777 625h2M775 629h2M125 630h2M127 634h2M772 634h2M770 638h2M130 639h2M131 641h2M767 643h2M133 644h2M134 646h2M764 648h2M136 649h2M139 654h2M760 654h2M140 655h2M757 659h2M143 660h2M756 660h2M754 663h2M753 665h2M147 666h2M752 666h2M148 667h2M750 669h2M150 670h2M749 670h2M151 671h2M745 676h2M155 677h2M744 677h2M156 678h2M741 681h2M159 682h2M740 682h2M160 683h2M736 687h2M164 688h2M735 688h2M165 689h2M732 692h2M731 693h2M169 694h2M730 694h2M170 695h2M171 696h2M726 699h2M725 700h2M175 701h2M724 701h2M722 703h2M178 704h2M721 704h2M179 705h2M720 705h2M180 706h2M719 706h2M181 707h2M182 708h2M184 710h2M715 710h2M185 711h2M186 712h2M187 713h2M189 715h2M710 715h2M190 716h2M709 716h2M191 717h2M192 718h2M193 719h2M194 720h2M705 720h2M195 721h2M704 721h2M196 722h2M703 722h2M197 723h2M702 723h2M198 724h2M701 724h2M202 727h2M698 727h2M203 728h2M204 729h2M205 730h2M694 730h2M693 731h2M692 732h2M209 733h2M691 733h2M210 734h2M211 735h2M688 735h2M687 736h2M686 737h2M215 738h2M685 738h2M216 739h2M217 740h2M682 740h2M681 741h2M220 742h2M680 742h2M221 743h2M222 744h2M677 744h2M225 746h2M674 746h2M226 747h2M673 747h2M229 749h2M670 749h2M231 750h2M669 750h2M232 751h2M233 752h2M666 752h2M235 753h2M664 753h2M236 754h2M663 754h2M237 755h2M662 755h2M239 756h2M660 756h2M659 757h2M242 758h2M657 758h3M243 759h2M656 759h2M245 760h2M654 760h2M247 761h2M653 761h2M248 762h2M651 762h2M250 763h2M649 763h2M648 764h2M253 765h2M646 765h3M254 766h2M645 766h2M256 767h2M643 767h2M258 768h2M641 768h3M259 769h3M639 769h3M262 770h2M638 770h2M263 771h2M636 771h2M265 772h2M634 772h2M267 773h2M632 773h3M268 774h2M631 774h2M270 775h3M628 775h3M272 776h2M627 776h2M274 777h2M625 777h2M276 778h2M623 778h2M278 779h2M621 779h2M280 780h2M619 780h2M282 781h2M617 781h3M284 782h2M615 782h2M286 783h2M613 783h3M288 784h3M610 784h3M290 785h2M609 785h2M292 786h3M606 786h3M294 787h3M604 787h3M297 788h3M602 788h2M299 789h3M599 789h3M302 790h2M597 790h3M304 791h3M594 791h3M306 792h3M592 792h3M309 793h3M590 793h2M311 794h3M587 794h3M314 795h2M585 795h3M316 796h3M582 796h3M319 797h3M579 797h3M321 798h4M576 798h4M324 799h4M573 799h4M328 800h3M570 800h4M331 801h3M567 801h4M334 802h3M564 802h4M337 803h3M561 803h3M340 804h4M557 804h4M344 805h3M554 805h4M347 806h4M550 806h4M350 807h5M547 807h4M354 808h4M543 808h4M358 809h5M538 809h5M362 810h5M534 810h5M367 811h5M530 811h4M371 812h6M525 812h5M376 813h6M519 813h6M381 814h6M514 814h6M387 815h7M507 815h7M393 816h8M500 816h8M401 817h9M491 817h10M409 818h11M481 818h11M420 819h18M463 819h18M438 820h25" stroke="#ffa07a"/><path transform="translate(0.5,0)" d="M80 433v35M81 418v15M81 468v15M82 409v9M82 483v10M83 401v7M83 493v8M84 394v7M84 502v6M85 388v6M85 509v6M86 383v4M86 515v5M87 378v4M87 520v5M88 373v4M88 526v4M89 368v4M89 530v5M90 364v4M90 535v4M91 360v4M91 539v4M92 356v4M92 543v4M93 353v3M93 547v4M94 349v3M94 551v3M95 346v3M95 555v3M96 343v2M96 558v3M97 340v2M97 562v2M98 336v3M98 565v2M99 333v3M99 568v2M100 330v3M100 571v2M101 327v3M101 574v3M102 325v2M102 577v2M103 322v3M103 579v3M104 319v2M104 582v2M105 317v2M105 585v2M106 315v2M106 588v2M107 312v2M107 590v2M108 309v2M108 593v2M109 307v2M109 595v2M110 305v2M110 597v2M111 303v2M111 600v2M112 300v2M112 602v2M113 298v2M113 605v2M114 296v2M114 607v1M115 294v1M115 609v2M116 292v2M116 611v2M117 290v1M117 613v2M118 288v2M118 615v2M119 286v1M119 618v1M120 284v1M120 619v2M121 282v1M121 622v1M122 280v1M122 623v2M123 278v2M123 626v1M124 276v1M124 627v2M125 274v2M125 629v1M126 272v2M126 631v2M127 271v1M127 633v1M128 269v1M128 635v1M129 267v1M129 636v2M130 266v1M130 638v1M131 264v1M131 640v1M132 262v1M132 642v1M133 261v1M133 643v1M134 259v1M134 645v1M135 257v1M135 647v1M136 256v1M136 648v1M137 254v1M137 650v1M138 252v2M138 651v2M139 251v1M139 653v1M140 249v1M141 248v1M141 656v1M142 246v2M142 657v2M143 245v1M143 659v1M144 243v1M144 661v1M145 242v1M145 662v1M146 241v1M146 663v2M147 239v1M147 665v1M148 237v2M149 236v1M149 668v1M150 235v1M150 669v1M151 233v1M152 232v1M152 672v1M153 231v1M153 673v1M154 674v2M155 228v1M155 676v1M156 227v1M157 226v1M157 679v1M158 224v1M158 680v1M159 681v1M160 221v1M161 220v1M161 684v1M162 219v1M162 685v1M163 686v1M164 687v1M165 215v1M166 214v1M166 690v1M167 213v1M167 691v1M168 692v1M169 211v1M169 693v1M172 207v1M172 697v1M173 206v1M173 698v1M174 205v1M174 699v1M175 204v1M175 700v1M177 702v1M178 200v1M178 703v1M182 196v1M183 195v1M183 709v1M184 194v1M185 193v1M186 192v1M187 191v1M188 190v1M188 714v1M189 189v1M190 188v1M191 187v1M192 186v1M193 185v1M194 184v1M195 183v1M197 181v1M198 180v1M200 725v1M201 726v1M205 174v1M206 173v1M207 731v1M208 171v1M208 732v1M213 736v1M214 166v1M214 737v1M219 741v1M220 161v1M224 745v1M228 748v1M232 152v1M236 149v1M240 146v1M241 757v1M252 764v1M426 80v1M474 80v1M660 146v1M664 149v1M668 751v1M671 154v1M672 748v1M676 745v1M679 743v1M680 161v1M684 739v1M686 166v1M690 734v1M692 171v1M696 729v1M697 728v1M699 726v1M700 725v1M702 180v1M703 181v1M706 184v1M707 185v1M707 719v1M708 186v1M708 718v1M709 717v1M711 189v1M712 190v1M712 714v1M713 191v1M713 713v1M714 712v1M715 711v1M716 194v1M717 195v1M717 709v1M718 196v1M718 708v1M719 197v1M719 707v1M720 198v1M722 200v1M723 201v1M723 702v1M726 205v1M727 206v1M727 698v1M728 207v1M728 697v1M729 208v1M729 696v1M730 695v1M733 691v1M734 214v1M734 690v1M735 215v1M735 689v1M736 216v1M737 686v1M738 685v1M739 220v1M739 684v1M740 221v1M740 683v1M741 222v1M742 224v1M742 680v1M743 225v1M743 679v1M744 227v1M744 678v1M745 228v1M746 229v1M746 675v1M747 673v2M748 232v1M748 672v1M749 233v1M749 671v1M751 236v1M751 668v1M752 237v2M752 667v1M753 239v1M754 240v1M754 664v1M755 242v1M755 662v1M756 243v1M756 661v1M758 246v1M758 658v1M759 247v2M759 656v2M760 249v1M760 655v1M761 251v1M761 653v1M762 252v1M762 652v1M763 253v2M763 650v2M764 255v1M764 649v1M765 257v1M765 647v1M766 258v2M766 645v2M767 260v1M767 644v1M768 262v1M768 642v1M769 263v2M769 640v2M770 265v1M770 639v1M771 267v1M771 637v1M772 269v1M772 635v2M773 271v1M773 633v1M774 272v1M774 631v2M775 274v1M775 630v1M776 276v1M776 627v2M777 278v1M777 626v1M778 280v1M778 624v1M779 281v2M779 622v1M780 284v1M780 620v1M781 285v2M781 618v1M782 287v2M782 616v2M783 289v2M783 613v2M784 291v2M784 612v1M785 293v2M785 609v2M786 296v1M786 607v2M787 297v2M787 605v2M788 300v2M788 603v2M789 302v2M789 600v2M790 305v2M790 598v2M791 307v2M791 596v2M792 309v2M792 593v2M793 312v2M793 591v2M794 314v2M794 588v2M795 316v2M795 585v3M796 319v2M796 583v2M797 322v2M797 580v3M798 324v2M798 578v2M799 327v2M799 574v3M800 330v2M800 571v3M801 333v2M801 568v3M802 336v3M802 565v3M803 339v3M803 562v3M804 342v3M804 559v3M805 345v3M805 555v4M806 349v3M806 552v3M807 352v3M807 548v3M808 356v3M808 544v3M809 359v4M809 540v4M810 363v4M810 536v4M811 368v4M811 531v5M812 372v4M812 526v5M813 376v5M813 521v5M814 381v6M814 516v5M815 387v5M815 510v5M816 393v6M816 503v7M817 399v8M817 495v7M818 407v9M818 486v9M819 417v12M819 472v13M820 429v43" stroke="#ffa07a"/>
<path transform="translate(0,0.5)" d="M425 266h5M471 266h6M418 267h7M476 267h7M413 268h6M482 268h6M408 269h6M487 269h6M404 270h5M492 270h5M401 271h4M496 271h4M397 272h5M500 272h4M394 273h4M503 273h4M391 274h4M506 274h4M388 275h4M509 275h4M386 276h3M512 276h4M383 277h3M515 277h3M381 278h3M518 278h3M378 279h3M520 279h3M376 280h3M522 280h3M374 281h3M525 281h2M371 282h3M527 282h3M369 283h3M529 283h3M367 284h3M531 284h3M365 285h3M533 285h3M364 286h2M535 286h3M362 287h2M537 287h3M360 288h2M539 288h2M358 289h3M541 289h2M356 290h3M542 290h3M355 291h2M544 291h3M353 292h2M546 292h2M352 293h2M547 293h3M350 294h2M549 294h2M348 295h3M550 295h3M347 296h2M552 296h2M345 297h3M553 297h3M344 298h2M555 298h2M343 299h2M556 299h3M341 300h2M558 300h2M340 301h2M559 301h2M339 302h2M560 302h3M337 303h2M562 303h2M336 304h2M563 304h2M335 305h2M564 305h2M334 306h2M566 306h2M332 307h2M567 307h2M331 308h2M568 308h2M330 309h2M569 309h2M329 310h2M328 311h2M573 312h2M574 313h2M324 314h2M575 314h2M323 315h2M576 315h2M322 316h2M577 316h2M321 317h2M578 317h2M320 318h2M579 318h2M319 319h2M580 319h2M318 320h2M581 320h2M317 321h2M582 321h2M316 322h2M583 322h2M315 323h2M584 323h2M314 324h2M585 324h2M313 325h2M586 325h2M587 326h2M311 328h2M310 329h2M589 329h2M309 330h2M308 331h2M591 331h2M307 332h2M592 332h2M593 333h2M305 335h2M304 336h2M595 336h2M596 337h2M302 339h2M301 340h2M598 340h2M300 341h2M599 341h2M299 343h2M298 344h2M601 344h2M602 345h2M296 347h2M603 347h2M604 348h2M295 349h2M294 350h2M605 350h2M293 352h2M292 353h2M607 353h2M291 355h2M608 355h2M609 356h2M289 358h2M610 358h2M288 360h2M611 360h2M287 362h2M612 362h2M286 364h2M285 366h2M284 368h2M283 370h2M282 372h2M281 374h2M280 376h2M619 376h2M620 378h2M278 381h2M622 383h2M276 386h2M623 386h2M275 389h2M625 391h2M274 392h2M626 394h2M273 395h2M272 398h2M628 401h2M271 402h2M629 405h2M270 406h2M630 409h2M269 410h2M632 419h2M267 420h2M633 426h2M266 427h2M634 435h2M265 462h2M634 465h2M266 473h2M633 474h2M267 480h2M632 481h2M269 490h2M630 491h2M271 499h2M272 502h2M627 503h2M626 506h2M625 509h2M275 512h2M624 512h2M623 515h2M277 517h2M622 518h2M278 520h2M621 520h2M279 522h2M280 525h2M619 525h2M281 527h2M618 527h2M282 529h2M283 531h2M284 533h2M285 535h2M286 537h2M287 539h2M612 539h2M288 541h2M611 541h2M610 543h2M290 544h2M291 546h2M608 546h2M607 548h2M293 549h2M294 551h2M605 551h2M295 552h2M604 553h2M296 554h2M603 554h2M602 556h2M298 557h2M601 557h2M299 558h2M300 560h2M599 560h2M301 561h2M598 561h2M302 562h2M596 564h2M304 565h2M595 565h2M305 566h2M593 568h2M307 569h2M592 569h2M308 570h2M591 570h2M309 571h2M590 571h2M310 572h2M589 572h2M311 573h2M312 574h2M586 576h2M585 577h2M315 578h2M584 578h2M583 579h2M317 580h2M582 580h2M318 581h2M581 581h2M319 582h2M580 582h2M320 583h2M579 583h2M321 584h2M578 584h2M577 585h2M323 586h2M576 586h2M325 587h2M575 587h2M326 588h2M327 589h2M572 589h2M328 590h2M571 590h2M329 591h2M570 591h2M330 592h2M569 592h2M331 593h2M568 593h2M333 594h2M566 594h2M334 595h2M565 595h2M335 596h2M564 596h2M337 597h2M563 597h2M338 598h2M561 598h2M339 599h2M560 599h2M340 600h3M558 600h3M342 601h2M557 601h2M343 602h3M555 602h3M345 603h2M554 603h2M346 604h3M553 604h2M348 605h2M551 605h2M349 606h3M550 606h2M351 607h2M548 607h2M353 608h2M546 608h3M354 609h3M545 609h2M356 610h2M543 610h2M358 611h2M541 611h3M360 612h2M539 612h3M361 613h3M537 613h3M363 614h3M535 614h3M365 615h3M533 615h3M367 616h3M531 616h3M369 617h3M529 617h3M371 618h3M527 618h3M374 619h3M525 619h3M376 620h3M522 620h3M378 621h3M520 621h3M381 622h3M517 622h4M383 623h4M514 623h4M386 624h4M512 624h3M389 625h4M509 625h3M392 626h4M505 626h4M395 627h4M502 627h4M398 628h5M498 628h5M402 629h5M495 629h4M406 630h5M490 630h5M410 631h6M485 631h6M415 632h7M479 632h7M421 633h9M472 633h8M429 634h13M459 634h13M441 635h19" stroke="#ffa07a"/><path transform="translate(0.5,0)" d="M265 438v24M266 428v10M266 463v10M267 421v6M267 474v6M268 415v5M268 481v5M269 411v4M269 486v4M270 407v3M270 491v4M271 403v3M271 495v4M272 399v3M272 500v2M273 396v2M273 503v3M274 393v2M274 506v3M275 390v2M275 509v3M276 387v2M276 513v2M277 384v2M277 515v2M278 382v2M278 518v2M279 379v2M279 521v1M280 377v2M280 523v2M281 375v1M281 526v1M282 373v1M282 528v1M283 371v1M283 530v1M284 369v1M284 532v1M285 367v1M285 534v1M286 365v1M286 536v1M287 363v1M287 538v1M288 361v1M288 540v1M289 359v1M289 542v1M290 357v1M290 543v1M291 356v1M291 545v1M292 354v1M292 547v1M293 548v1M294 351v1M294 550v1M296 348v1M296 553v1M297 346v1M297 555v1M298 345v1M298 556v1M300 342v1M300 559v1M303 338v1M303 563v1M304 337v1M304 564v1M306 334v1M306 567v1M307 333v1M307 568v1M312 327v1M313 326v1M313 575v1M314 576v1M315 577v1M317 579v1M323 585v1M326 313v1M327 312v1M571 310v1M572 311v1M574 588v1M587 575v1M588 327v1M588 574v1M589 328v1M589 573v1M591 330v1M594 334v1M594 567v1M595 335v1M595 566v1M597 338v1M597 563v1M598 339v1M598 562v1M600 342v1M600 559v1M601 343v1M601 558v1M603 346v1M603 555v1M605 349v1M605 552v1M606 351v1M606 550v1M607 352v1M607 549v1M608 354v1M608 547v1M609 545v1M610 357v1M610 544v1M611 359v1M611 542v1M612 361v1M612 540v1M613 363v1M613 538v1M614 364v2M614 536v2M615 366v2M615 534v2M616 368v2M616 532v2M617 370v2M617 530v2M618 372v2M618 528v2M619 374v2M619 526v1M620 377v1M620 523v2M621 379v2M621 521v2M622 381v2M622 519v1M623 384v2M623 516v2M624 387v2M624 513v2M625 389v2M625 510v2M626 392v2M626 507v2M627 395v3M627 504v2M628 398v3M628 500v3M629 402v3M629 496v4M630 406v3M630 492v4M631 410v4M631 487v4M632 414v5M632 482v5M633 420v6M633 475v6M634 427v8M634 466v8M635 436v29" stroke="#ffa07a"/>
</g></g>
<text class="s" x="429.5" y="84" font-size="11" fill="#ffff00" textLength="42.5" lengthAdjust="spacingAndGlyphs">100 NMI</text>
<text class="s" x="432" y="268.8" font-size="11" fill="#ffff00" textLength="37" lengthAdjust="spacingAndGlyphs">50 NMI</text>
<text class="m" x="715.5" y="15.5" font-size="12.5" fill="#ffff00" stroke="#ffff00" textLength="167.5" lengthAdjust="spacingAndGlyphs">NEXLAB-College of DuPage</text>
<g transform="translate(0.5,0.5)" fill="none" stroke="#ffff00" stroke-width="1" shape-rendering="crispEdges"><polyline points="888,14.5 888,6 894,6 890,10 894,14"/><path d="M893.5,11.5h1v3h-3v-1h1v-1h1z" fill="#ffff00" stroke="none"/></g>
<text class="m" x="863.5" y="64" font-size="13" fill="#ffff00" stroke="#ffff00" textLength="31" lengthAdjust="spacingAndGlyphs">NIDS</text>
<text class="m" x="815" y="73.5" font-size="12.5" fill="#ffff00" stroke="#ffff00" textLength="52.5" lengthAdjust="spacingAndGlyphs">[kg/m2]</text>
<g shape-rendering="crispEdges">
<rect x="873" y="87" width="21" height="715" fill="#909090"/>
<rect x="874" y="88" width="19" height="713" fill="#000"/>
<rect x="875" y="89" width="17" height="91" fill="url(#g0)"/>
<rect x="875" y="180" width="17" height="89" fill="url(#g1)"/>
<rect x="875" y="269" width="17" height="88.5" fill="url(#g2)"/>
<rect x="875" y="357.5" width="17" height="88.5" fill="url(#g3)"/>
<rect x="875" y="446" width="17" height="91" fill="url(#g4)"/>
<rect x="875" y="537" width="17" height="88.5" fill="url(#g5)"/>
<rect x="875" y="625.5" width="17" height="89.0" fill="url(#g6)"/>
</g>
<text class="m" x="859.5" y="784.5" font-size="13" fill="#ffff00" stroke="#ffff00" textLength="7" lengthAdjust="spacingAndGlyphs">0</text>
<text class="m" x="859.5" y="743.5" font-size="13" fill="#ffff00" stroke="#ffff00" textLength="7" lengthAdjust="spacingAndGlyphs">5</text>
<text class="m" x="851.5" y="702.5" font-size="13" fill="#ffff00" stroke="#ffff00" textLength="15" lengthAdjust="spacingAndGlyphs">10</text>
<text class="m" x="851.5" y="661.5" font-size="13" fill="#ffff00" stroke="#ffff00" textLength="15" lengthAdjust="spacingAndGlyphs">15</text>
<text class="m" x="851.5" y="620.5" font-size="13" fill="#ffff00" stroke="#ffff00" textLength="15" lengthAdjust="spacingAndGlyphs">20</text>
<text class="m" x="851.5" y="579.5" font-size="13" fill="#ffff00" stroke="#ffff00" textLength="15" lengthAdjust="spacingAndGlyphs">25</text>
<text class="m" x="851.5" y="538.5" font-size="13" fill="#ffff00" stroke="#ffff00" textLength="15" lengthAdjust="spacingAndGlyphs">30</text>
<text class="m" x="851.5" y="497.5" font-size="13" fill="#ffff00" stroke="#ffff00" textLength="15" lengthAdjust="spacingAndGlyphs">35</text>
<text class="m" x="851.5" y="456.5" font-size="13" fill="#ffff00" stroke="#ffff00" textLength="15" lengthAdjust="spacingAndGlyphs">40</text>
<text class="m" x="851.5" y="415.5" font-size="13" fill="#ffff00" stroke="#ffff00" textLength="15" lengthAdjust="spacingAndGlyphs">45</text>
<text class="m" x="851.5" y="374.5" font-size="13" fill="#ffff00" stroke="#ffff00" textLength="15" lengthAdjust="spacingAndGlyphs">50</text>
<text class="m" x="851.5" y="333.5" font-size="13" fill="#ffff00" stroke="#ffff00" textLength="15" lengthAdjust="spacingAndGlyphs">55</text>
<text class="m" x="851.5" y="292.5" font-size="13" fill="#ffff00" stroke="#ffff00" textLength="15" lengthAdjust="spacingAndGlyphs">60</text>
<text class="m" x="851.5" y="251.5" font-size="13" fill="#ffff00" stroke="#ffff00" textLength="15" lengthAdjust="spacingAndGlyphs">65</text>
<text class="m" x="851.5" y="210.5" font-size="13" fill="#ffff00" stroke="#ffff00" textLength="15" lengthAdjust="spacingAndGlyphs">70</text>
<text class="m" x="851.5" y="169.5" font-size="13" fill="#ffff00" stroke="#ffff00" textLength="15" lengthAdjust="spacingAndGlyphs">75</text>
<text class="m" x="851.5" y="128.5" font-size="13" fill="#ffff00" stroke="#ffff00" textLength="15" lengthAdjust="spacingAndGlyphs">80</text>
<text class="m" x="162.5" y="897" font-size="12.2" fill="#ffffff" textLength="584" lengthAdjust="spacingAndGlyphs">DIGITAL VERTICALLY INTEGRATED LIQUID (VIL) - KEYX 20 OCT 25 00:59</text>
</svg></body></html>
